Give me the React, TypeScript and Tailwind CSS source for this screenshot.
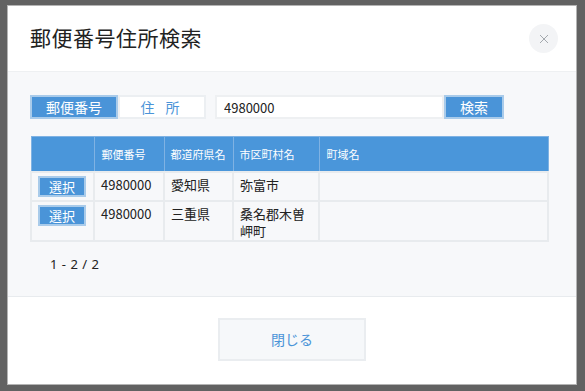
import { useState } from "react";

const rows = [
    { zip: "4980000", pref: "愛知県", city: "弥富市", town: "" },
    { zip: "4980000", pref: "三重県", city: "桑名郡木曽岬町", town: "" },
];

const font = "font-['Noto_Sans_CJK_JP','Noto_Sans',sans-serif]";

const App = () => {
    const [zip, setZip] = useState("4980000");
    const [mode, setMode] = useState("zip");

    return (
        <div className={`w-[585px] h-[391px] bg-[#626262] pt-[5px] pl-[7px] ${font}`}>
            <div className="w-[570px] h-[380px] bg-white border border-[#b4b4b4] flex flex-col">
                <div className="h-[66px] flex items-center justify-between pl-[22px] pr-[18px] border-b border-[#eef0f2]">
                    <h1 className="text-[21px] text-[#222] leading-none tracking-[0.5px] pb-[2px]">郵便番号住所検索</h1>
                    <button className="w-[29px] h-[29px] rounded-full bg-[#f3f4f6] text-[#a4a9ae] flex items-center justify-center">
                        <svg width="10" height="10" viewBox="0 0 10 10" stroke="currentColor" strokeWidth="1">
                            <path d="M1 1L9 9M9 1L1 9" />
                        </svg>
                    </button>
                </div>

                <div className="h-[225px] bg-[#f7f8fa] border-b border-[#e8ebee] pl-[22px] pt-[23px]">
                    <div className="flex h-[24px]">
                        <button
                            onClick={() => setMode("zip")}
                            className={`w-[88px] h-full border-2 text-[14px] leading-none ${mode === "zip" ? "bg-[#4a94d8] border-[#a9cbea] text-white" : "bg-white border-[#eceff2] text-[#4a94d8]"}`}
                        >郵便番号</button>
                        <button
                            onClick={() => setMode("addr")}
                            className={`w-[88px] h-full border-2 text-[14px] leading-none tracking-[4px] ${mode === "addr" ? "bg-[#4a94d8] border-[#a9cbea] text-white" : "bg-white border-[#eceff2] text-[#4a94d8]"}`}
                        >住 所</button>
                        <input
                            value={zip}
                            onChange={e => setZip(e.target.value)}
                            className="ml-[9px] w-[229px] h-full bg-white border-2 border-[#eef0f2] px-[7px] text-[13px] text-[#222] outline-none"
                        />
                        <button className="w-[60px] h-full bg-[#4a94d8] border-2 border-[#a9cbea] text-white text-[14px] leading-none">検索</button>
                    </div>

                    <table className="mt-[17px] w-[519px] border-collapse text-left table-fixed">
                        <thead>
                            <tr className="h-[35px] bg-[#4a96da] text-white text-[11px]">
                                <th className="w-[63px] border border-[#7fb2e3] font-normal"></th>
                                <th className="w-[70px] border border-[#7fb2e3] font-normal px-[7px]">郵便番号</th>
                                <th className="w-[69px] border border-[#7fb2e3] font-normal px-[6px]">都道府県名</th>
                                <th className="w-[86px] border border-[#7fb2e3] font-normal px-[6px]">市区町村名</th>
                                <th className="border border-[#7fb2e3] font-normal px-[7px]">町域名</th>
                            </tr>
                        </thead>
                        <tbody className="text-[13px] text-[#222]">
                            {rows.map((r, i) => (
                                <tr key={i} className="align-top">
                                    <td className="border-2 border-[#e8ebee] pt-[3px] pb-[3px] pl-[6px]">
                                        <button className="w-[48px] h-[21px] bg-[#4a94d8] border-2 border-[#a9cbea] text-white text-[13px] leading-none">選択</button>
                                    </td>
                                    <td className="border-2 border-[#e8ebee] px-[6px] pt-[3px] leading-[17px]">{r.zip}</td>
                                    <td className="border-2 border-[#e8ebee] px-[6px] pt-[3px] leading-[17px]">{r.pref}</td>
                                    <td className="border-2 border-[#e8ebee] px-[6px] pt-[3px] pb-[1px] leading-[17px]">{r.city}</td>
                                    <td className="border-2 border-[#e8ebee] px-[6px] pt-[3px] leading-[17px]">{r.town}</td>
                                </tr>
                            ))}
                        </tbody>
                    </table>

                    <p className="mt-[13px] pl-[20px] text-[13px] text-[#222] tracking-[0.5px] font-['Noto_Sans',sans-serif]">1 - 2 / 2</p>
                </div>

                <div className="flex-1 flex justify-center pt-[21px]">
                    <button className="w-[148px] h-[43px] bg-[#f6f8fa] border-2 border-[#eaedf0] text-[#4a94d8] text-[14px]">閉じる</button>
                </div>
            </div>
        </div>
    )
}

export default App
